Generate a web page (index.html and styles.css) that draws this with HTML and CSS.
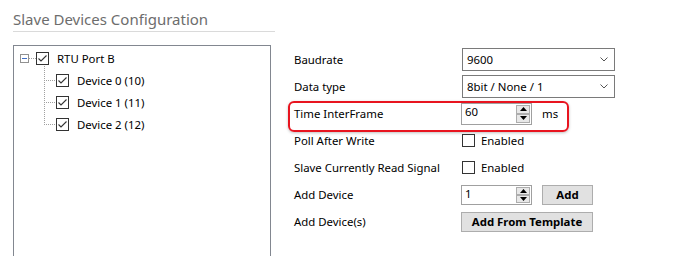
FILE: index.html
```html
<!DOCTYPE html>
<html lang="en">
<head>
    <meta charset="UTF-8">
    <title>Slave Devices Configuration</title>
    <link rel="stylesheet" href="styles.css">
</head>
<body>
    <div class="page">
        <div class="title">Slave Devices Configuration</div>

        <div class="content">
            <!-- device tree -->
            <div class="tree">
                <div class="tree-row">
                    <span class="expander"></span>
                    <span class="hdots root-dots"></span>
                    <span class="check on">
                        <svg width="11" height="11" viewBox="0 0 11 11"><polyline points="1.5,5.5 4,8 9.5,2.5" fill="none" stroke="#333" stroke-width="1.1"/></svg>
                    </span>
                    <span class="tree-label">RTU Port B</span>
                </div>
                <div class="tree-children">
                    <div class="tree-row">
                        <span class="hdots"></span>
                        <span class="check on">
                            <svg width="11" height="11" viewBox="0 0 11 11"><polyline points="1.5,5.5 4,8 9.5,2.5" fill="none" stroke="#333" stroke-width="1.1"/></svg>
                        </span>
                        <span class="tree-label">Device 0 (10)</span>
                    </div>
                    <div class="tree-row">
                        <span class="hdots"></span>
                        <span class="check on">
                            <svg width="11" height="11" viewBox="0 0 11 11"><polyline points="1.5,5.5 4,8 9.5,2.5" fill="none" stroke="#333" stroke-width="1.1"/></svg>
                        </span>
                        <span class="tree-label">Device 1 (11)</span>
                    </div>
                    <div class="tree-row">
                        <span class="hdots"></span>
                        <span class="check on">
                            <svg width="11" height="11" viewBox="0 0 11 11"><polyline points="1.5,5.5 4,8 9.5,2.5" fill="none" stroke="#333" stroke-width="1.1"/></svg>
                        </span>
                        <span class="tree-label">Device 2 (12)</span>
                    </div>
                </div>
            </div>

            <!-- settings -->
            <div class="form">
                <div class="row">
                    <span class="label">Baudrate</span>
                    <div class="combo">
                        <span>9600</span>
                        <svg width="8" height="5" viewBox="0 0 8 5"><polyline points="0.5,0.5 4,4 7.5,0.5" fill="none" stroke="#555" stroke-width="1"/></svg>
                    </div>
                </div>
                <div class="row">
                    <span class="label">Data type</span>
                    <div class="combo">
                        <span>8bit / None / 1</span>
                        <svg width="8" height="5" viewBox="0 0 8 5"><polyline points="0.5,0.5 4,4 7.5,0.5" fill="none" stroke="#555" stroke-width="1"/></svg>
                    </div>
                </div>
                <div class="row highlight">
                    <span class="label">Time InterFrame</span>
                    <div class="spin">
                        <span class="spin-value">60</span>
                        <div class="spin-buttons">
                            <span class="spin-btn"><svg width="7" height="4" viewBox="0 0 7 4"><polygon points="0,4 3.5,0 7,4" fill="#000"/></svg></span>
                            <span class="spin-btn"><svg width="7" height="4" viewBox="0 0 7 4"><polygon points="0,0 3.5,4 7,0" fill="#000"/></svg></span>
                        </div>
                    </div>
                    <span class="unit">ms</span>
                </div>
                <div class="row">
                    <span class="label">Poll After Write</span>
                    <span class="check"></span>
                    <span class="check-label">Enabled</span>
                </div>
                <div class="row">
                    <span class="label">Slave Currently Read Signal</span>
                    <span class="check"></span>
                    <span class="check-label">Enabled</span>
                </div>
                <div class="row">
                    <span class="label">Add Device</span>
                    <div class="spin small">
                        <span class="spin-value">1</span>
                        <div class="spin-buttons">
                            <span class="spin-btn"><svg width="7" height="4" viewBox="0 0 7 4"><polygon points="0,4 3.5,0 7,4" fill="#000"/></svg></span>
                            <span class="spin-btn"><svg width="7" height="4" viewBox="0 0 7 4"><polygon points="0,0 3.5,4 7,0" fill="#000"/></svg></span>
                        </div>
                    </div>
                    <button class="btn btn-add">Add</button>
                </div>
                <div class="row">
                    <span class="label">Add Device(s)</span>
                    <button class="btn btn-template">Add From Template</button>
                </div>
            </div>
        </div>
    </div>
</body>
</html>
```

FILE: styles.css
```css
* {
    margin: 0;
    padding: 0;
    box-sizing: border-box;
}

body {
    font-family: 'Noto Sans', 'Open Sans', sans-serif;
    font-size: 11.4px;
    color: #000;
    background: #fff;
    width: 697px;
    height: 256px;
    overflow: hidden;
}

.page {
    height: 256px;
    overflow: hidden;
    padding: 8px 0 0 13px;
}

.title {
    width: 262px;
    font-size: 15px;
    line-height: 22px;
    color: #6d6d6d;
    padding-bottom: 1px;
    border-bottom: 1px solid #dadada;
}

.content {
    display: flex;
    margin-top: 13px;
}

/* tree */

.tree {
    width: 258px;
    height: 213px;
    border: 1px solid #828790;
    padding: 1px 0 0 6px;
}

.tree-row {
    display: flex;
    align-items: center;
    height: 22px;
}

.expander {
    width: 9px;
    height: 9px;
    border: 1px solid #919191;
    background: linear-gradient(#3f6ec6, #3f6ec6) center / 5px 1px no-repeat;
}

.hdots {
    width: 12px;
    height: 1px;
    background: repeating-linear-gradient(to right, #a0a0a0 0 1px, transparent 1px 2px);
}

.root-dots {
    width: 7px;
}

.check {
    width: 13px;
    height: 13px;
    border: 1px solid #333;
    background: #fff;
    display: flex;
    align-items: center;
    justify-content: center;
    flex-shrink: 0;
}

.tree-label {
    margin-left: 8px;
}

.tree-children {
    margin-left: 24px;
    margin-top: -5px;
    padding-top: 5px;
    background: repeating-linear-gradient(to bottom, #a0a0a0 0 1px, transparent 1px 2px) 0 0 / 1px calc(100% - 11px) no-repeat;
}

/* form */

.form {
    margin-left: 23px;
    padding-top: 3px;
    display: flex;
    flex-direction: column;
    gap: 4px;
}

.row {
    display: flex;
    align-items: center;
    height: 23px;
}

.label {
    width: 168px;
}

.combo {
    width: 153px;
    height: 23px;
    border: 1px solid #7a7a7a;
    display: flex;
    align-items: center;
    justify-content: space-between;
    padding: 0 6px 0 4px;
}

.highlight {
    position: relative;
}

.highlight::before {
    content: '';
    position: absolute;
    left: -6px;
    top: -1px;
    width: 277px;
    height: 27px;
    border: 2px solid #e8141f;
    border-radius: 6px;
    box-shadow: 0 1px 3px rgba(0, 0, 0, 0.25);
}

.spin {
    width: 71px;
    height: 22px;
    border: 1px solid #a0a0a0;
    display: flex;
    align-items: stretch;
    margin-left: -1px;
}

.spin.small {
    height: 20px;
}

.spin-value {
    flex: 1;
    padding: 0 3px;
    line-height: 16px;
}

.spin-buttons {
    width: 15px;
    display: flex;
    flex-direction: column;
    padding: 1px 1px 1px 0;
}

.spin-btn {
    flex: 1;
    border: 1px solid #adadad;
    background: #e8e8e8;
    display: flex;
    align-items: center;
    justify-content: center;
}

.unit {
    margin-left: 10px;
}

.check-label {
    margin-left: 6px;
}

.btn {
    font-family: inherit;
    font-size: 11.4px;
    font-weight: bold;
    height: 20px;
    background: #e1e1e1;
    border: 1px solid #adadad;
    color: #000;
}

.btn-add {
    width: 51px;
    margin-left: 10px;
}

.btn-template {
    width: 132px;
    margin-left: -1px;
}
```
